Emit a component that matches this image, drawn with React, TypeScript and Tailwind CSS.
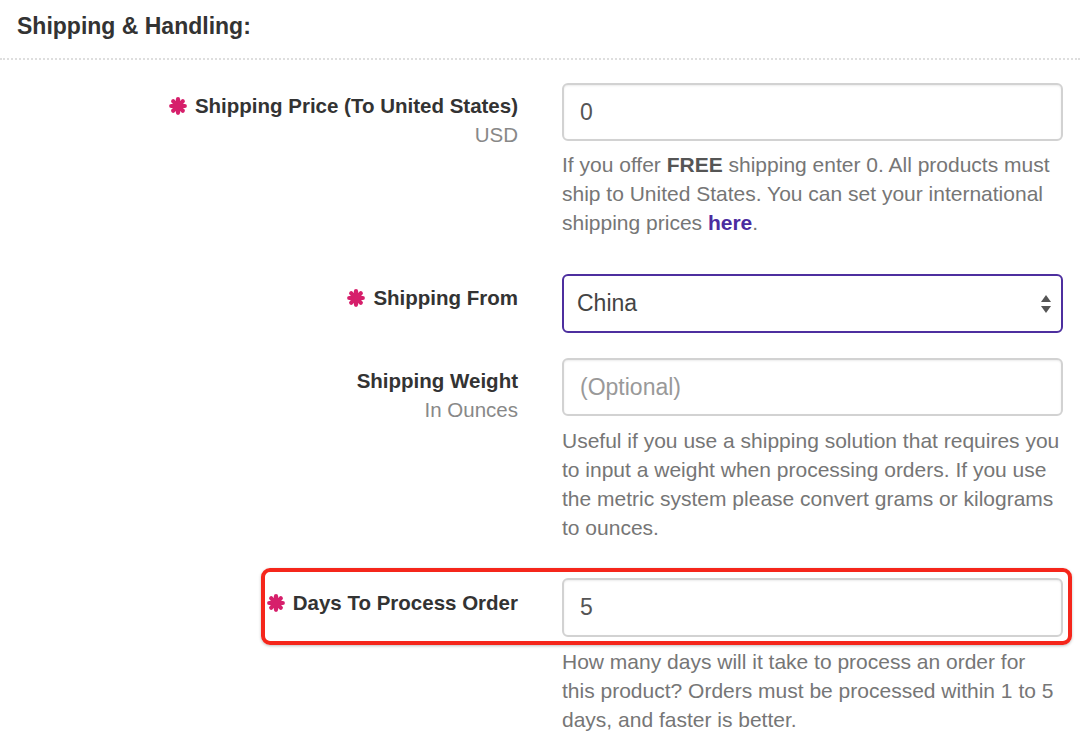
import React from 'react';

function Req() {
  return (
    <svg width="18" height="18" viewBox="0 0 18 18" className="inline-block mr-[8px] -mt-[3px] align-middle">
      <g stroke="#d61f6b" strokeWidth="4.2" strokeLinecap="round">
        <line x1="9" y1="2.2" x2="9" y2="15.8" />
        <line x1="2.2" y1="9" x2="15.8" y2="9" />
        <line x1="4.2" y1="4.2" x2="13.8" y2="13.8" />
        <line x1="13.8" y1="4.2" x2="4.2" y2="13.8" />
      </g>
    </svg>
  );
}

const inputCls =
  'w-full h-[58px] border-2 border-[#d2d2d2] rounded-[6px] bg-white px-[16px] text-[23px] text-[#555] shadow-[inset_0_1px_2px_rgba(0,0,0,0.08)] outline-none';

function Help({ children, className = '' }: { children: React.ReactNode; className?: string }) {
  return <p className={`text-[21px] leading-[29px] text-[#767676] ${className}`}>{children}</p>;
}

export default function App() {
  return (
    <div className="w-[1080px] h-[746px] overflow-hidden bg-white text-[#333] font-['Liberation_Sans',Arial,sans-serif]">
      <div className="h-[58px] pl-[17px] pt-[10px]">
        <h2 className="text-[23px] leading-[32px] font-bold text-[#333]">Shipping &amp; Handling:</h2>
      </div>
      <div className="border-t-2 border-dotted border-[#dedede]" />

      {/* price */}
      <div className="flex pr-[17px] mt-[23px]">
        <div className="w-[518px] text-right pt-[8px]">
          <div className="text-[20.5px] leading-[29px] font-bold"><Req />Shipping Price (To United States)</div>
          <div className="text-[20.5px] leading-[29px] text-[#888]">USD</div>
        </div>
        <div className="flex-1 ml-[44px]">
          <input className={inputCls} defaultValue="0" />
          <Help className="mt-[9px]">
            If you offer <b className="text-[#555]">FREE</b> shipping enter 0. All products must ship to United States. You can set your international shipping prices <a className="font-bold text-[#4b2c9f]">here</a>.
          </Help>
        </div>
      </div>

      {/* from */}
      <div className="flex pr-[17px] mt-[37px]">
        <div className="w-[518px] text-right pt-[9px]">
          <div className="text-[20.5px] leading-[29px] font-bold"><Req />Shipping From</div>
        </div>
        <div className="flex-1 ml-[44px]">
          <div className="relative h-[59px] border-2 border-[#4d2f9f] rounded-[6px] bg-white flex items-center pl-[13px] text-[23px] text-[#444]">
            China
            <svg width="12" height="20" viewBox="0 0 12 20" className="absolute right-[9px] top-[18px]">
              <path d="M6 1 L11 8 L1 8 Z" fill="#555" />
              <path d="M6 19 L11 12 L1 12 Z" fill="#555" />
            </svg>
          </div>
        </div>
      </div>

      {/* weight */}
      <div className="flex pr-[17px] mt-[25px]">
        <div className="w-[518px] text-right pt-[8px]">
          <div className="text-[20.5px] leading-[29px] font-bold">Shipping Weight</div>
          <div className="text-[20.5px] leading-[29px] text-[#888]">In Ounces</div>
        </div>
        <div className="flex-1 ml-[44px]">
          <input className={`${inputCls} placeholder:text-[#999]`} placeholder="(Optional)" />
          <Help className="mt-[10px]">
            Useful if you use a shipping solution that requires you to input a weight when processing orders. If you use the metric system please convert grams or kilograms to ounces.
          </Help>
        </div>
      </div>

      {/* days */}
      <div className="relative flex pr-[17px] mt-[36px]">
        <div className="w-[518px] text-right pt-[10px]">
          <div className="text-[20.5px] leading-[29px] font-bold"><Req />Days To Process Order</div>
        </div>
        <div className="flex-1 ml-[44px]">
          <input className={`${inputCls} h-[59px]`} defaultValue="5" />
          <Help className="mt-[10px]">
            How many days will it take to process an order for this product? Orders must be processed within 1 to 5 days, and faster is better.
          </Help>
        </div>
        <div className="absolute left-[261px] right-[8px] top-[-10px] h-[77px] border-[4px] border-[#f5261b] rounded-[9px] shadow-[0_1px_3px_rgba(0,0,0,0.25)]" />
      </div>
    </div>
  );
}
